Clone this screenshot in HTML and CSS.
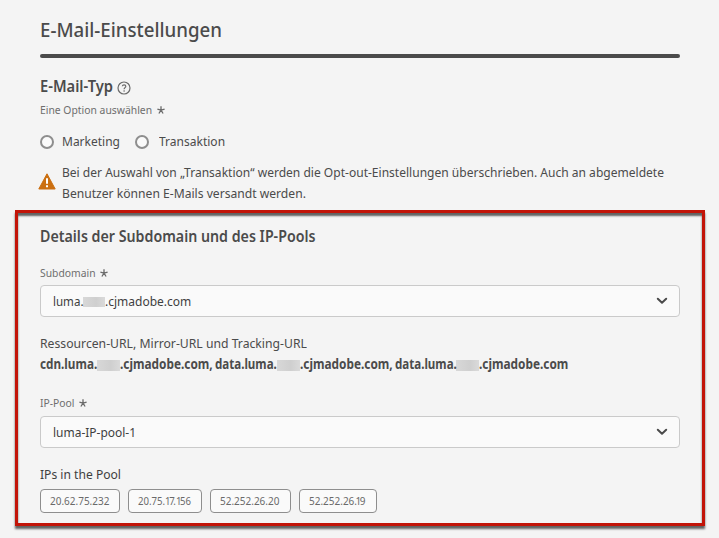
FILE: index.html
```html
<!DOCTYPE html>
<html lang="de">
<head>
<meta charset="utf-8">
<title>E-Mail-Einstellungen</title>
<link rel="stylesheet" href="styles.css">
</head>
<body>
<svg width="0" height="0" class="defs">
  <symbol id="star" viewBox="0 0 8 8"><path d="M4 4.2V.3M4 4.2.4 3.1M4 4.2l3.6-1.1M4 4.2 1.9 7.5M4 4.2l2.1 3.3" fill="none" stroke="#6a6a6a" stroke-width="1.3"/></symbol>
  <symbol id="chevron" viewBox="0 0 12 8"><path d="M1.8 1.8 6 5.8l4.2-4" fill="none" stroke="#4b4b4b" stroke-width="2" stroke-linecap="round" stroke-linejoin="round"/></symbol>
</svg>
<header class="head">
  <h1><span class="t t-title">E-Mail-Einstellungen</span></h1>
</header>
<section class="type">
  <h2><span class="t t-type">E-Mail-Typ</span>
    <svg class="help" viewBox="0 0 14 14"><circle cx="7" cy="7" r="6" fill="none" stroke="#6a6a6a" stroke-width="1.2"/><path d="M5.3 5.3c.2-2 3.5-2 3.5 0 0 1.3-1.7 1.5-1.7 3" fill="none" stroke="#6a6a6a" stroke-width="1.2"/><circle cx="7.1" cy="10" r=".8" fill="#6a6a6a"/></svg>
  </h2>
  <div class="label"><span class="t t-option">Eine Option auswählen</span><svg class="star"><use href="#star"/></svg></div>
  <div class="radios">
    <label><i class="radio"></i><span class="t t-marketing">Marketing</span></label>
    <label class="second"><i class="radio"></i><span class="t t-transaktion">Transaktion</span></label>
  </div>
  <div class="warning">
    <svg viewBox="0 0 18 17"><path d="M9 .8 17.2 16H.8Z" fill="#cb6f10" stroke="#cb6f10" stroke-linejoin="round"/><path d="M8 5.2h2v5.6H8zM8 12.2h2v2H8z" fill="#fff"/></svg>
    <p><span class="t t-warn1">Bei der Auswahl von „Transaktion“ werden die Opt-out-Einstellungen überschrieben. Auch an abgemeldete</span><br><span class="t t-warn2">Benutzer können E-Mails versandt werden.</span></p>
  </div>
</section>
<section class="details">
  <h2><span class="t t-details">Details der Subdomain und des IP-Pools</span></h2>
  <div class="label"><span class="t t-subdomain">Subdomain</span><svg class="star"><use href="#star"/></svg></div>
  <div class="select"><span class="t t-luma">luma.</span><i class="mask"></i><span class="t t-domain">.cjmadobe.com</span><svg class="chevron"><use href="#chevron"/></svg></div>
  <div class="urls">
    <div class="line"><span class="t t-urls">Ressourcen-URL, Mirror-URL und Tracking-URL</span></div>
    <div class="line bold"><span class="t t-cdn">cdn.luma.</span><i class="mask"></i><span class="t t-host">.cjmadobe.com, </span><span class="t t-data">data.luma.</span><i class="mask"></i><span class="t t-host">.cjmadobe.com, </span><span class="t t-data">data.luma.</span><i class="mask"></i><span class="t t-host">.cjmadobe.com</span></div>
  </div>
  <div class="label"><span class="t t-pool">IP-Pool</span><svg class="star"><use href="#star"/></svg></div>
  <div class="select pool"><span class="t t-poolname">luma-IP-pool-1</span><svg class="chevron"><use href="#chevron"/></svg></div>
  <div class="line ips"><span class="t t-ips">IPs in the Pool</span></div>
  <div class="chips">
    <span class="chip c1"><span class="t">20.62.75.232</span></span>
    <span class="chip c2"><span class="t">20.75.<b>17</b>.<b>1</b>56</span></span>
    <span class="chip c3"><span class="t">52.252.26.20</span></span>
    <span class="chip c4"><span class="t">52.252.26<b>.1</b>9</span></span>
  </div>
</section>
</body>
</html>
```
FILE: styles.css
```css
* { box-sizing: border-box; }
body {
  margin: 0;
  width: 719px;
  height: 538px;
  overflow: hidden;
  background: #f4f4f4;
  color: #4b4b4b;
  font: 400 13.44px/21px "Noto Sans", sans-serif;
}
h1, h2, p { margin: 0; }
svg { display: block; flex: none; }
.defs { position: absolute; }

/* Condensed text runs: layout width plus a horizontal scale */
.t {
  display: inline-block;
  flex: none;
  white-space: pre;
  transform-origin: 0 50%;
}
.t-title { transform: scaleX(.974); }
.t-type { width: 77px; transform: scaleX(.958); }
.t-option { width: 117px; transform: scaleX(.939); }
.t-marketing { width: 73px; transform: scaleX(.893); }
.t-transaktion { width: 66px; transform: scaleX(.895); }
.t-warn1 { width: 602px; transform: scaleX(.896); }
.t-warn2 { width: 244px; transform: scaleX(.902); }
.t-details { transform: scaleX(.926); }
.t-subdomain { width: 60px; transform: scaleX(.937); }
.t-luma { width: 30px; transform: scaleX(.86); }
.t-domain { width: 86px; transform: scaleX(.893); }
.t-urls { transform: scaleX(.908); }
.t-cdn { width: 57px; transform: scaleX(.872); }
.t-host { width: 95px; transform: scaleX(.88); }
.t-data { width: 61.5px; transform: scaleX(.86); }
.t-pool { width: 39px; transform: scaleX(.937); }
.t-poolname { transform: scaleX(.891); }
.t-ips { transform: scaleX(.9); }

.head { margin: 0 39px 0 40px; padding-top: 10px; height: 58px; display: flex; flex-direction: column; justify-content: space-between; }
.head::after { content: ""; height: 4px; border-radius: 2px; background: #4b4b4b; }
h1 { font-size: 19.2px; font-weight: 500; line-height: 40px; height: 40px; }
h2 { display: flex; align-items: center; height: 20px; font-size: 15.36px; font-weight: 600; line-height: 20px; }

.type { margin-left: 40px; padding-top: 19px; height: 152px; }
.help { width: 14px; height: 14px; margin-top: 2px; }
.label { display: flex; align-items: center; height: 16px; font-size: 11.04px; line-height: 16px; color: #6e6e6e; }
.type .label { margin-top: 5px; }
.star { width: 8px; height: 8px; }
.radios { display: flex; margin-top: 14px; height: 19px; line-height: 19px; }
.radios label { display: flex; align-items: center; gap: 8px; }
.radios .second { gap: 10px; }
.radio { width: 14px; height: 14px; margin-top: 1px; border: 2px solid #8e8e8e; border-radius: 50%; background: #fafafa; }
.warning { display: flex; gap: 6px; margin: 11px 0 0 -2px; height: 42px; }
.warning svg { width: 18px; height: 17px; margin-top: 11px; }

.details {
  width: 690px;
  height: 316px;
  margin-left: 15px;
  padding: 14px 22px 0;
  border: 3px solid #c21408;
  box-shadow: 0 3px 2px rgba(0, 0, 0, .6), inset 0 3px 2px rgba(0, 0, 0, .6);
}
.details .label { margin-top: 18px; }
.select {
  display: flex;
  align-items: center;
  width: 640px;
  height: 32px;
  margin-top: 4px;
  padding: 0 11px 0 12px;
  border: 1px solid #cacaca;
  border-radius: 4px;
  background: #fafafa;
  color: #3f3f3f;
}
.mask { flex: none; width: 23px; height: 11px; margin-top: 1px; background: linear-gradient(90deg, #d8d8d8, #cfcfcf 60%, #dadada); }
.select .mask { width: 22px; height: 10px; margin-top: 1px; }
.chevron { width: 12px; height: 8px; margin-left: auto; }
.urls { margin-top: 16px; height: 42px; }
.line { display: flex; align-items: center; height: 21px; }
.bold { font-weight: 700; }
.details .urls + .label { margin-top: 20px; }
.details .pool { margin-top: 5px; }
.ips { margin-top: 16px; height: 20px; color: #3f3f3f; }
.chips { display: flex; margin-top: 5px; height: 24px; }
.chip {
  height: 24px;
  padding-left: 9px;
  border: 1px solid #8e8e8e;
  border-radius: 4px;
  background: #fafafa;
  color: #6a6a6a;
  font-size: 11.04px;
  line-height: 22px;
}
.chip b { font-weight: inherit; letter-spacing: -1.6px; }
.c1 { width: 80px; margin-right: 8px; }
.c2 { width: 74px; margin-right: 8px; }
.c3 { width: 81px; margin-right: 8px; }
.c4 { width: 78px; }
.chip .t { width: 60px; transform: scaleX(.905); }
.c2 .t { width: 53px; transform: scaleX(.87); }
.c4 .t { width: 57px; transform: scaleX(.905); }
```
